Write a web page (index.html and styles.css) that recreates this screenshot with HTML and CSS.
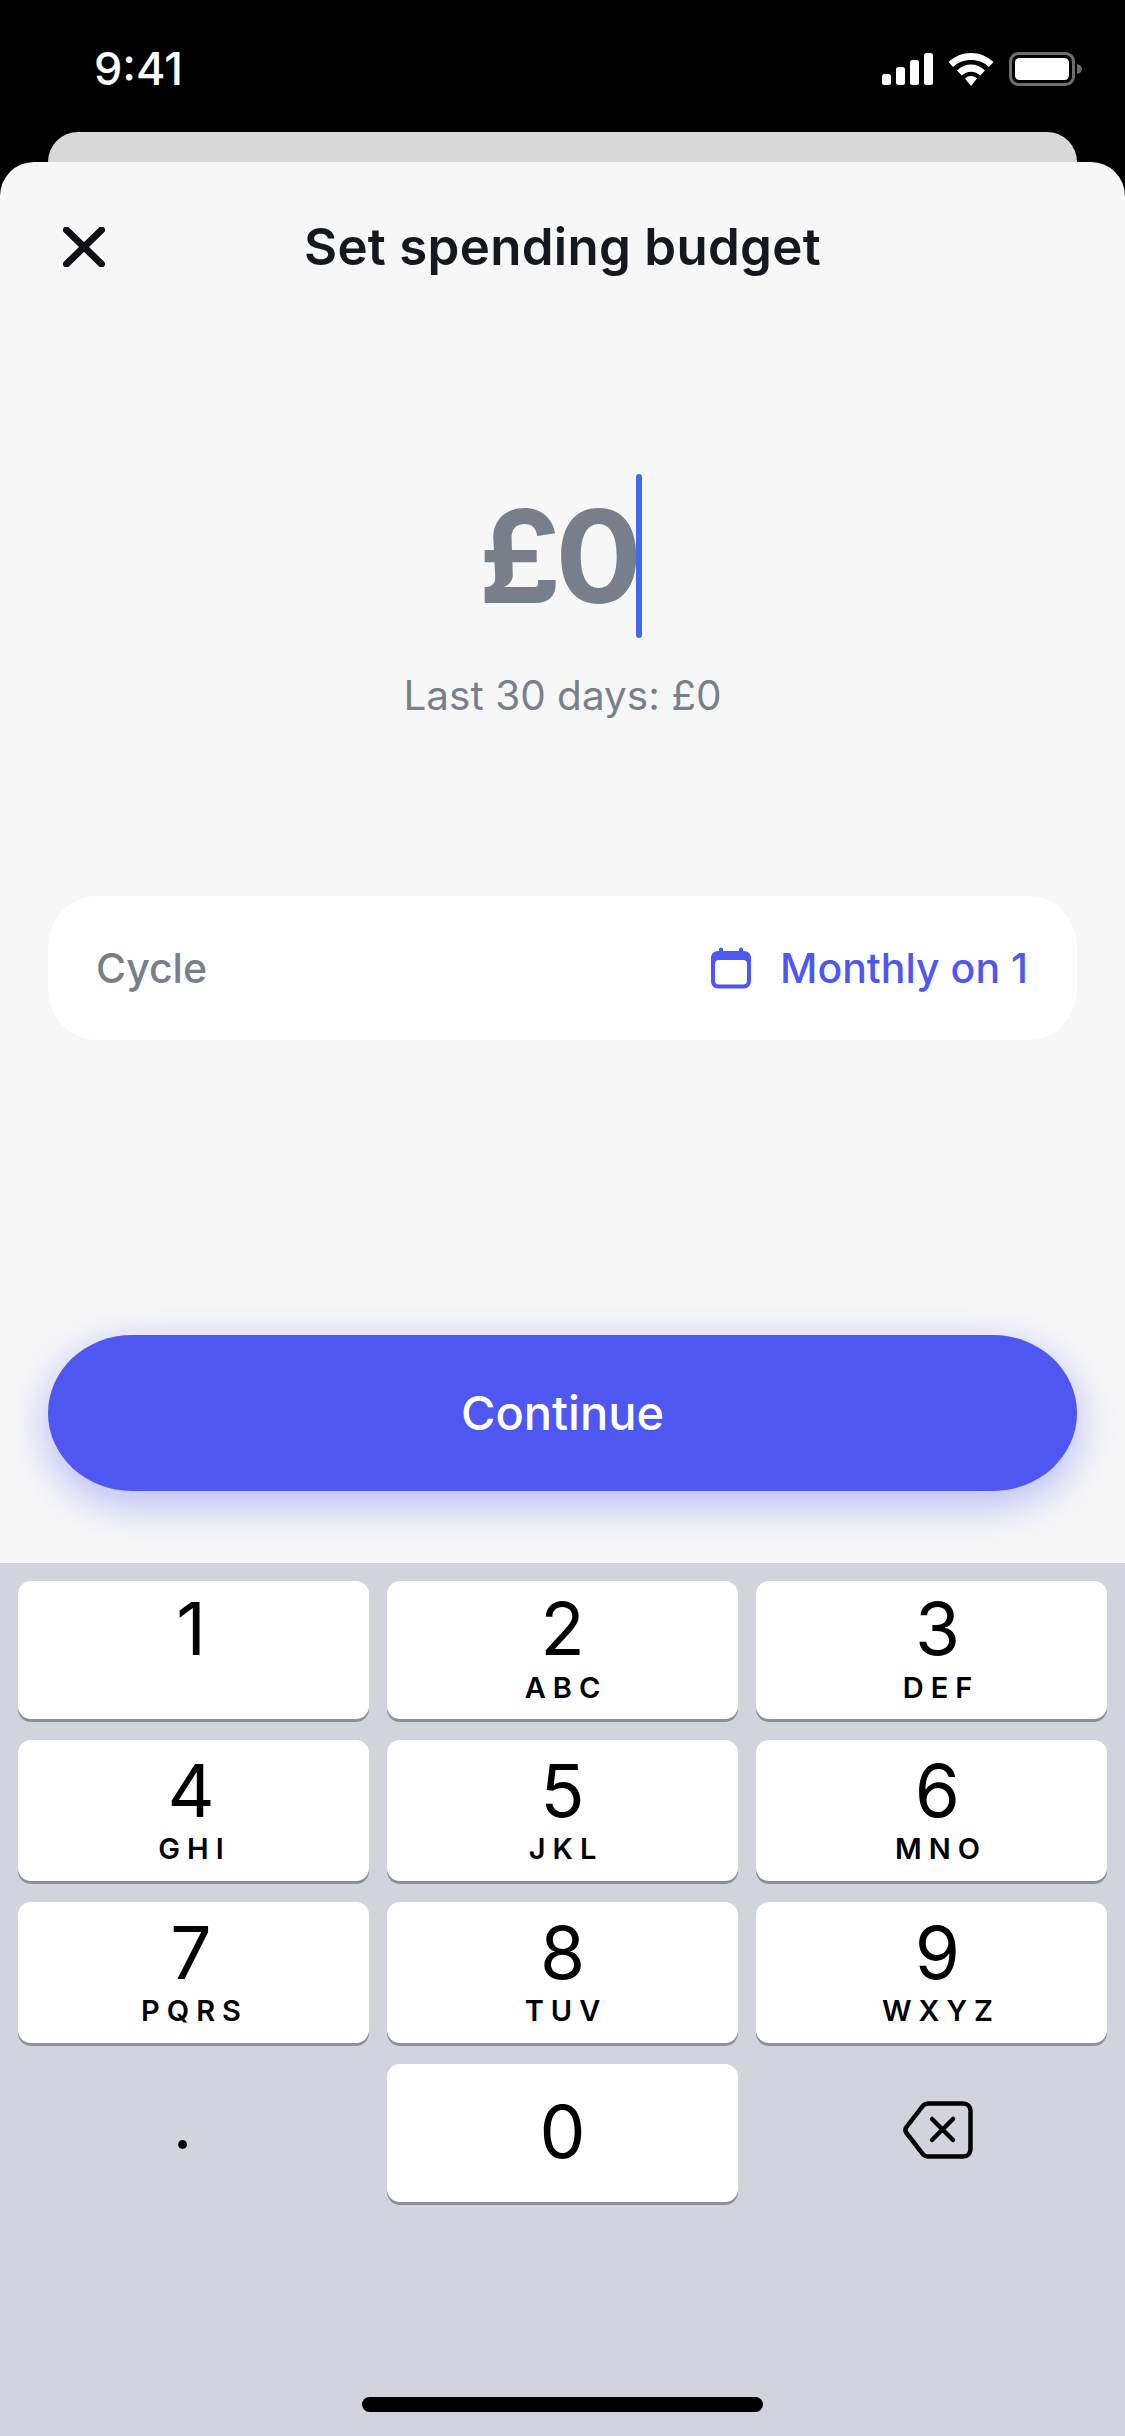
FILE: index.html
```html
<!DOCTYPE html>
<html lang="en">
<head>
    <meta charset="UTF-8">
    <meta name="viewport" content="width=device-width, initial-scale=1.0">
    <title>Set spending budget</title>
    <link rel="stylesheet" href="styles.css">
</head>
<body>
    <div class="status-bar">
        <span class="time">9:41</span>
        <div class="status-icons">
            <svg width="51" height="32" viewBox="0 0 51 32"><rect x="0" y="21" width="9" height="11" rx="2.5" fill="#fff"/><rect x="14" y="14" width="9" height="18" rx="2.5" fill="#fff"/><rect x="28" y="7" width="9" height="25" rx="2.5" fill="#fff"/><rect x="42" y="0" width="9" height="32" rx="2.5" fill="#fff"/></svg>
            <svg width="46" height="33" viewBox="0 0 46 33"><path d="M23 0C14.500 0 6.800 3.300 0.500 9L5 14C9.700 9.600 16 7 23 7S36.300 9.600 41 14L45.500 9C39.200 3.300 31.500 0 23 0Z" fill="#fff"/><path d="M23 11.500C18 11.500 13.400 13.400 9 17.500L13.800 22.500C16.400 20.200 19.500 18.700 23 18.700S29.600 20.200 32.200 22.500L37 17.500C32.600 13.400 28 11.500 23 11.500Z" fill="#fff"/><path d="M23 23C20.800 23 18.800 23.800 17 25.500L23 33L29 25.500C27.200 23.800 25.200 23 23 23Z" fill="#fff"/></svg>
            <svg width="74" height="34" viewBox="0 0 74 34"><rect x="1.500" y="1.500" width="63" height="31" rx="8" fill="none" stroke="#6e6e6e" stroke-width="3"/><rect x="6" y="6" width="54" height="22" rx="4.500" fill="#fff"/><path d="M68 12C71 12.500 73 14.500 73 17S71 21.500 68 22Z" fill="#6e6e6e"/></svg>
        </div>
    </div>

    <div class="back-card"></div>

    <main class="sheet">
        <header class="sheet-header">
            <svg class="close-icon" width="42" height="40" viewBox="0 0 42 40"><path d="M3.500 3L38.500 37M38.500 3L3.500 37" stroke="#0f1114" stroke-width="7" stroke-linecap="round" fill="none"/></svg>
            <h1>Set spending budget</h1>
        </header>

        <div class="amount-box">
            <div class="amount"><span>£0</span><i class="caret"></i></div>
            <p class="last-days">Last 30 days: £0</p>
        </div>

        <div class="cycle-card">
            <span class="cycle-label">Cycle</span>
            <div class="cycle-value">
                <svg width="40" height="42" viewBox="0 0 40 42"><path d="M10 0.500C11.200 0.500 12 1.300 12 2.500V4H28V2.500C28 1.300 28.800 0.500 30 0.500S32 1.300 32 2.500V4H33C37 4 40 7 40 11V34C40 38.500 37 41.500 33 41.500H7C3 41.500 0 38.500 0 34V11C0 7 3 4 7 4H8V2.500C8 1.300 8.800 0.500 10 0.500Z" fill="#4e57f2"/><rect x="4" y="13" width="32" height="24.500" rx="4" fill="#fff"/></svg>
                <span>Monthly on 1</span>
            </div>
        </div>

        <button class="continue-btn">Continue</button>
    </main>

    <section class="keyboard">
        <div class="keys">
            <div class="key"><span class="digit">1</span></div>
            <div class="key"><span class="digit">2</span><span class="letters">ABC</span></div>
            <div class="key"><span class="digit">3</span><span class="letters">DEF</span></div>
            <div class="key key-tall"><span class="digit">4</span><span class="letters">GHI</span></div>
            <div class="key key-tall"><span class="digit">5</span><span class="letters">JKL</span></div>
            <div class="key key-tall"><span class="digit">6</span><span class="letters">MNO</span></div>
            <div class="key key-tall"><span class="digit">7</span><span class="letters">PQRS</span></div>
            <div class="key key-tall"><span class="digit">8</span><span class="letters">TUV</span></div>
            <div class="key key-tall"><span class="digit">9</span><span class="letters">WXYZ</span></div>
            <div class="key key-blank"><span class="dot">.</span></div>
            <div class="key key-zero"><span class="digit">0</span></div>
            <div class="key key-blank key-delete">
                <svg width="70" height="58" viewBox="0 0 70 58"><path d="M25 2.500H60C64.500 2.500 67.500 5.500 67.500 10V48C67.500 52.500 64.500 55.500 60 55.500H25C23 55.500 21.500 54.800 20 53.300L3.500 32C2 30 2 28 3.500 26L20 4.700C21.500 3.200 23 2.500 25 2.500Z" fill="none" stroke="#000" stroke-width="4.500"/><path d="M29 18L50 39M50 18L29 39" stroke="#000" stroke-width="4.500" stroke-linecap="round" fill="none"/></svg>
            </div>
        </div>
        <div class="home-indicator"></div>
    </section>
</body>
</html>
```

FILE: styles.css
```css
* {
    box-sizing: border-box;
}
body {
    margin: 0;
    width: 1125px;
    height: 2436px;
    overflow: hidden;
    background-color: #000;
    font-family: Inter, "Liberation Sans", sans-serif;
    display: flex;
    flex-direction: column;
}
.status-bar {
    height: 132px;
    padding: 0 42px 0 94px;
    display: flex;
    justify-content: space-between;
    align-items: flex-start;
}
.time {
    margin-top: 45px;
    font-size: 45px;
    line-height: 48px;
    font-weight: 500;
    color: #fff;
}
.status-icons {
    margin-top: 52px;
    display: flex;
    align-items: center;
    gap: 15px;
}
.back-card {
    height: 30px;
    margin: 0 48px;
    background-color: #d8d8d8;
    border-radius: 30px 30px 0 0;
}
.sheet {
    height: 1401px;
    background-color: #f7f7f7;
    border-radius: 34px 34px 0 0;
    padding: 0 48px;
    display: flex;
    flex-direction: column;
}
.sheet-header {
    height: 164px;
    display: flex;
    align-items: center;
    justify-content: center;
    position: relative;
}
.close-icon {
    position: absolute;
    left: 15px;
    top: 65px;
}
h1 {
    margin: 6px 0 0;
    font-size: 51px;
    line-height: 64px;
    font-weight: 600;
    letter-spacing: 0.3px;
    color: #15181c;
}
.amount-box {
    margin-top: 148px;
    display: flex;
    flex-direction: column;
    align-items: center;
}
.amount {
    height: 164px;
    padding-right: 4px;
    display: flex;
    align-items: center;
    font-size: 129px;
    font-weight: 700;
    letter-spacing: -6px;
    color: #77808a;
}
.caret {
    width: 6px;
    height: 164px;
    background-color: #4169e8;
    border-radius: 3px;
}
.last-days {
    margin: 33px 0 0;
    font-size: 40.5px;
    line-height: 50px;
    color: #77808a;
}
.cycle-card {
    margin-top: 175px;
    height: 144px;
    padding: 0 49px 0 48px;
    background-color: #fff;
    border-radius: 48px / 52px;
    display: flex;
    justify-content: space-between;
    align-items: center;
    font-size: 41px;
    font-weight: 450;
}
.cycle-label {
    color: #77808a;
}
.cycle-value {
    display: flex;
    align-items: center;
    gap: 29px;
    color: #4e57f2;
}
.continue-btn {
    margin-top: 295px;
    height: 156px;
    padding-bottom: 3px;
    border: none;
    border-radius: 84px / 78px;
    background-color: #4e57f2;
    color: #fff;
    font-family: inherit;
    font-size: 47px;
    font-weight: 450;
    box-shadow: 0 12px 44px rgba(78, 87, 242, 0.4);
}
.keyboard {
    flex: 1;
    background-color: #d1d4dc;
    padding: 18px 18px 0;
    display: flex;
    flex-direction: column;
    position: relative;
}
.keys {
    display: grid;
    grid-template-columns: repeat(3, 351px);
    grid-template-rows: 138px 141px 141px 138px;
    column-gap: 18px;
    row-gap: 21px;
}
.key {
    background-color: #fff;
    border-radius: 13px;
    box-shadow: 0 3px 0 #8e9095;
    display: flex;
    flex-direction: column;
    align-items: center;
    padding-top: 10px;
    color: #000;
}
.key:nth-child(3n + 1) {
    padding-right: 5px;
}
.key:nth-child(3n) {
    padding-left: 12px;
}
.key-tall {
    padding-top: 13px;
}
.digit {
    font-size: 73px;
    line-height: 76px;
    font-weight: 400;
}
.letters {
    margin-top: 4px;
    font-size: 29px;
    line-height: 34px;
    font-weight: 600;
    letter-spacing: 7px;
    padding-left: 7px;
}
.key-tall .letters {
    margin-top: 3px;
}
.key-blank {
    background: none;
    box-shadow: none;
}
.key-zero {
    padding-top: 30px;
}
.dot {
    font-size: 68px;
    line-height: 68px;
    margin: 16px 17px 0 0;
}
.key-delete {
    padding-top: 37px;
}
.home-indicator {
    position: absolute;
    left: 362px;
    bottom: 24px;
    width: 401px;
    height: 15px;
    border-radius: 8px;
    background-color: #000;
}
```
